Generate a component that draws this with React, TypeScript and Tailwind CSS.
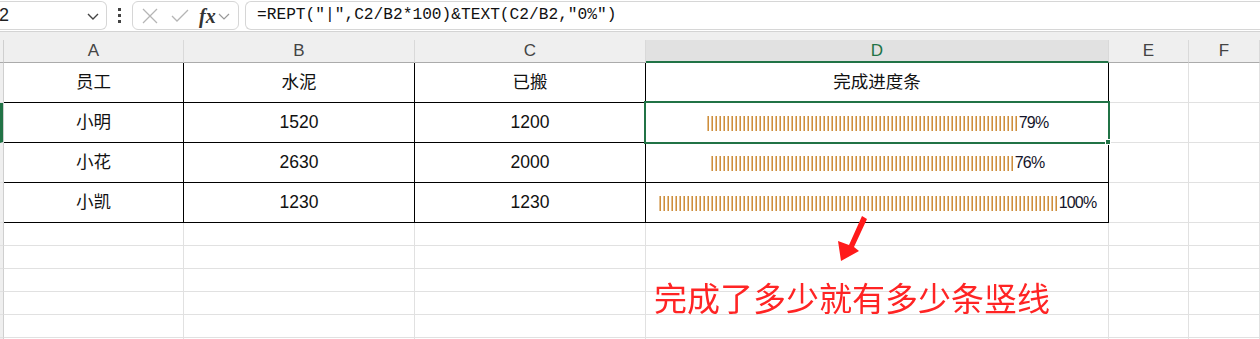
import React from "react";

const CJK = "font-['Liberation_Sans','Noto_Sans_CJK_SC',sans-serif]";

function HeaderCell({ label, w, active }: { label: string; w: string; active?: boolean }) {
  return (
    <div
      className={`${w} h-full flex items-center justify-center border-r border-[#d9d9d9] ${
        active ? "bg-[#e1e1e1] border-b-2 border-b-[#217346] text-[#217346]" : "border-b border-b-[#ababab] text-[#444]"
      } text-[17px] font-['Liberation_Sans',sans-serif]`}
    >
      {label}
    </div>
  );
}

function Bars({ n, pct }: { n: number; pct: string }) {
  return (
    <span className="flex items-center whitespace-nowrap">
      <span className="text-[17px] tracking-[-0.416px] leading-none text-[#c98226] will-change-transform font-['Liberation_Sans',sans-serif]">
        {"|".repeat(n)}
      </span>
      <span className="ml-[1px] text-[16px] text-[#14142a] font-['Liberation_Sans',sans-serif] tracking-[-0.8px]">{pct}</span>
    </span>
  );
}

const COLW = ["w-[180px]", "w-[231px]", "w-[231px]", "w-[463px]", "w-[80px]", "flex-1"];

function DataRow({ cells, h, table, selected }: { cells: React.ReactNode[]; h: string; table: boolean; selected?: boolean }) {
  return (
    <div className={`flex ${h}`}>
      <div className={`w-[4px] h-full bg-[#efefef] border-r border-r-[#cfcfcf] border-b border-b-[#e1e1e1] ${selected ? "border-l-[3px] border-l-[#217346]" : ""}`} />
      {COLW.map((w, i) => {
        const inTable = table && i < 4;
        return (
          <div
            key={i}
            className={`${w} h-full flex items-center justify-center border-r border-b ${
              inTable ? "border-r-black border-b-black" : "border-r-[#e1e1e1] border-b-[#e1e1e1]"
            } text-[17.5px] text-[#111] ${CJK}`}
          >
            {cells[i] ?? null}
          </div>
        );
      })}
    </div>
  );
}

export default function App() {
  return (
    <div className="relative w-[1260px] h-[339px] overflow-hidden bg-white">
      {/* formula bar */}
      <div className="flex items-stretch h-[32px] border-b border-[#d4d4d4] bg-white pt-[1px] pb-[1px]">
        <div className="w-[107px] flex items-center justify-between border border-[#d6d6d6] border-l-0 rounded-r-[6px] bg-white pr-[6px]">
          <span className="text-[18px] text-[#222] font-['Liberation_Sans',sans-serif] -ml-[1px]">2</span>
          <svg width="14" height="10" viewBox="0 0 14 10">
            <path d="M2 3 L7 8 L12 3" fill="none" stroke="#444" strokeWidth="1.4" />
          </svg>
        </div>
        <div className="w-[25px] flex flex-col items-center justify-center gap-[3px]">
          <span className="w-[3px] h-[3px] bg-[#444]" />
          <span className="w-[3px] h-[3px] bg-[#444]" />
          <span className="w-[3px] h-[3px] bg-[#444]" />
        </div>
        <div className="w-[107px] flex items-center border border-[#d6d6d6] rounded-[6px] bg-white pl-[8px]">
          <svg width="18" height="18" viewBox="0 0 18 18">
            <path d="M2 2 L16 16 M16 2 L2 16" stroke="#b5b5b5" strokeWidth="1.3" fill="none" />
          </svg>
          <svg width="20" height="18" viewBox="0 0 20 18" className="ml-[11px]">
            <path d="M2 9 L7 14 L18 3" stroke="#b5b5b5" strokeWidth="1.3" fill="none" />
          </svg>
          <span className="ml-[9px] text-[20px] italic font-bold text-[#333] font-['Liberation_Serif',serif] leading-none">fx</span>
          <svg width="12" height="10" viewBox="0 0 12 10" className="ml-[2px]">
            <path d="M1 3 L6 8 L11 3" fill="none" stroke="#999" strokeWidth="1.2" />
          </svg>
        </div>
        <div className="flex-1 ml-[6px] flex items-center border border-[#d6d6d6] border-r-0 rounded-l-[6px] bg-white pl-[11px]">
          <span className="text-[16.2px] text-[#111] font-['Liberation_Mono',monospace] whitespace-pre">
            =REPT("|",C2/B2*100)&amp;TEXT(C2/B2,"0%")
          </span>
        </div>
      </div>
      {/* gap */}
      <div className="h-[8px] bg-[#efefef]" />
      {/* column headers */}
      <div className="flex h-[23px] bg-[#efefef]">
        <div className="w-[4px] h-full border-r border-r-[#cfcfcf] border-b border-b-[#ababab]" />
        <HeaderCell label="A" w="w-[180px]" />
        <HeaderCell label="B" w="w-[231px]" />
        <HeaderCell label="C" w="w-[231px]" />
        <HeaderCell label="D" w="w-[463px]" active />
        <HeaderCell label="E" w="w-[80px]" />
        <HeaderCell label="F" w="flex-1" />
      </div>
      <DataRow h="h-[40px]" table cells={["员工", "水泥", "已搬", "完成进度条"]} />
      <DataRow h="h-[40px]" table selected cells={["小明", "1520", "1200", <Bars n={78} pct="79%" />]} />
      <DataRow h="h-[40px]" table cells={["小花", "2630", "2000", <Bars n={76} pct="76%" />]} />
      <DataRow h="h-[40px]" table cells={["小凯", "1230", "1230", <Bars n={100} pct="100%" />]} />
      <DataRow h="h-[23px]" table={false} cells={[]} />
      <DataRow h="h-[23px]" table={false} cells={[]} />
      <DataRow h="h-[23px]" table={false} cells={[]} />
      <DataRow h="h-[23px]" table={false} cells={[]} />
      <DataRow h="h-[23px]" table={false} cells={[]} />
      <DataRow h="h-[23px]" table={false} cells={[]} />

      {/* selection outline on D2 */}
      <div className="absolute left-[644px] top-[101px] w-[466px] h-[43px] border-2 border-[#217346] pointer-events-none" />
      <div className="absolute left-[1105px] top-[139px] w-[6px] h-[6px] bg-[#217346] border border-white" />

      {/* annotation arrow */}
      <svg className="absolute left-0 top-0 pointer-events-none" width="1260" height="339">
        <polygon
          points="862,216 867,219 854,247 859,251 841,261 838,241 849,245"
          fill="#ff1a1a"
        />
      </svg>
      <div className="absolute left-[654px] top-[277px] text-[33px] leading-[40px] text-[#ff2424] font-['Noto_Sans_CJK_SC',sans-serif] whitespace-nowrap">
        完成了多少就有多少条竖线
      </div>
    </div>
  );
}
